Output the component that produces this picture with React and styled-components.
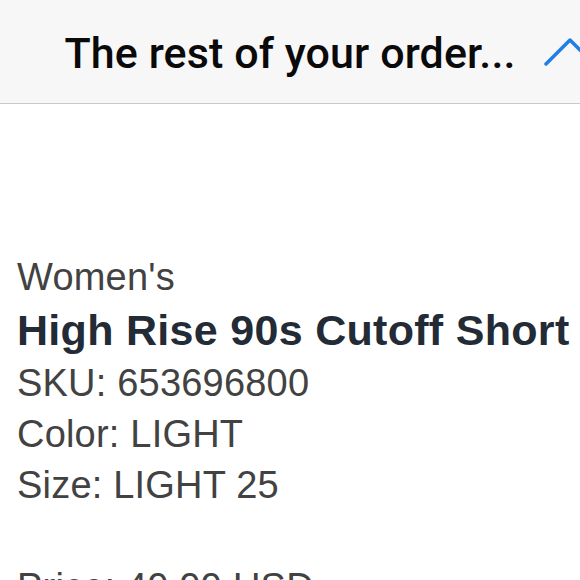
import React from 'react'
import styled, { createGlobalStyle } from 'styled-components'

const GlobalStyle = createGlobalStyle`
  html, body {
    margin: 0;
    padding: 0;
    background: #ffffff;
  }
  body {
    width: 580px;
    height: 580px;
    overflow: hidden;
  }
`

const App = () => {
  return (
    <Page>
      <GlobalStyle />
      <Header>
        <HeaderTitle>The rest of your order...</HeaderTitle>
        <Chevron viewBox="0 0 52 30" aria-hidden="true">
          <polyline points="2,27 26,3 50,27" />
        </Chevron>
      </Header>
      <Item>
        <Line>Women's</Line>
        <ProductName>High Rise 90s Cutoff Short</ProductName>
        <Line>SKU: 653696800</Line>
        <Line>Color: LIGHT</Line>
        <Line>Size: LIGHT 25</Line>
        <Line $gap>Price: 49.99 USD</Line>
      </Item>
    </Page>
  )
}

export default App

const Page = styled.div`
  width: 580px;
  height: 580px;
  overflow: hidden;
  background: #ffffff;
`

const Header = styled.header`
  position: relative;
  height: 103px;
  display: flex;
  align-items: center;
  justify-content: center;
  background: #f7f7f7;
  border-bottom: 1px solid #c9c9c9;
`

const HeaderTitle = styled.h1`
  margin: 0;
  margin-top: 3px;
  font-family: Roboto, "Noto Sans", sans-serif;
  font-weight: 500;
  font-size: 43px;
  letter-spacing: 0.1px;
  color: #0a0a0a;
  white-space: nowrap;
`

const Chevron = styled.svg`
  position: absolute;
  left: 544px;
  top: 37px;
  width: 52px;
  height: 30px;
  fill: none;
  stroke: #1f7fe6;
  stroke-width: 3.5;
  stroke-linecap: round;
  stroke-linejoin: round;
`

const Item = styled.section`
  padding: 148px 0 0 17px;
  display: flex;
  flex-direction: column;
`

const Line = styled.div`
  font-family: "Liberation Sans", Arial, sans-serif;
  font-size: 38px;
  line-height: 51px;
  letter-spacing: 0.2px;
  color: #424242;
  white-space: nowrap;
  margin-top: ${p => (p.$gap ? '51px' : '0')};
`

const ProductName = styled.div`
  font-family: "Liberation Sans", Arial, sans-serif;
  font-weight: 700;
  font-size: 43px;
  line-height: 55px;
  letter-spacing: 0.3px;
  color: #232b36;
  white-space: nowrap;
`
